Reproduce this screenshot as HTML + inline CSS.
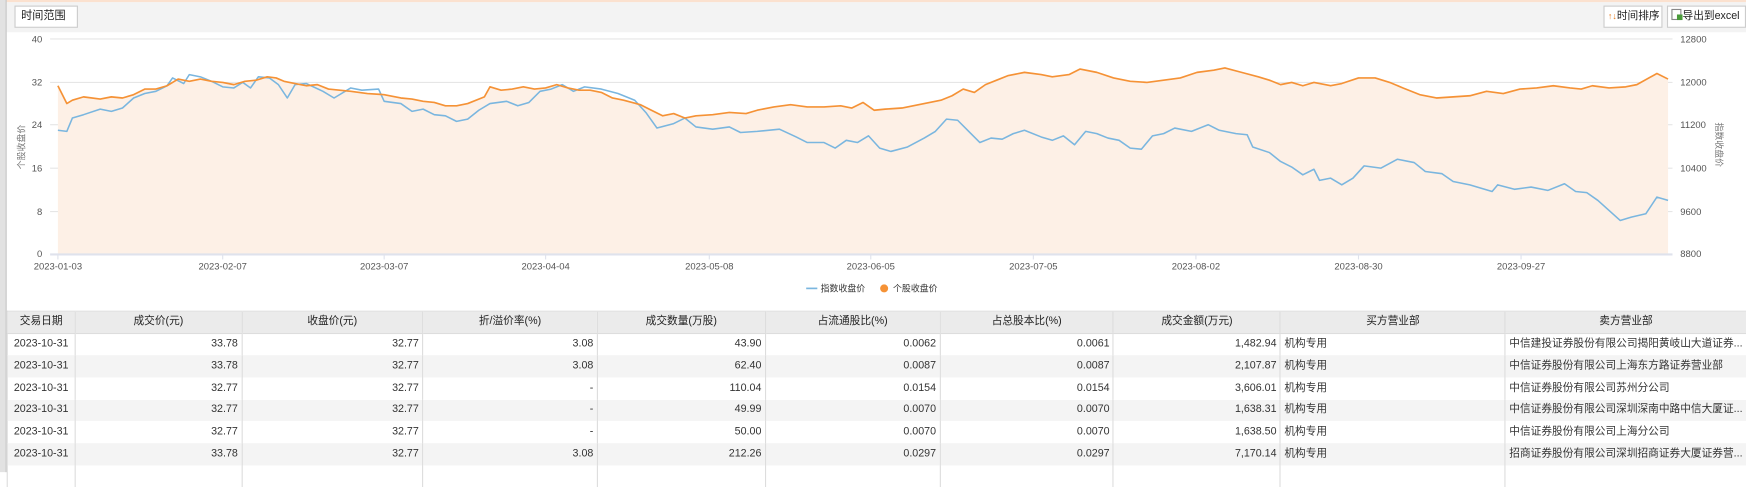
<!DOCTYPE html>
<html><head><meta charset="utf-8"><style>
html,body{margin:0;padding:0;width:1746px;height:472px;overflow:hidden;background:#fff;font-family:"Liberation Sans","Noto Sans CJK SC",sans-serif;}
#w{position:absolute;left:0;top:0;width:1568px;height:424px;transform:scale(1.11352);transform-origin:0 0;}
.abs{position:absolute}
.btn{position:absolute;background:#fff;border:1px solid #ccc;font-size:10px;color:#222;line-height:18px;box-sizing:border-box;height:20px;white-space:nowrap;overflow:hidden}
table{position:absolute;left:6px;top:279px;border-collapse:collapse;font-size:9.6px;color:#333;table-layout:fixed}
td,th{height:19.75px;line-height:12px;padding:0 3px;border-left:1px solid #ddd;white-space:nowrap;overflow:hidden;box-sizing:border-box;vertical-align:middle}
th{background:#ebebeb;font-weight:normal;color:#222;text-align:center;border-bottom:1px solid #ddd;border-top:1px solid #ddd}
td{text-align:right}
td.l{text-align:left}td.c{text-align:center}
tr:nth-child(odd) td{background:#f4f4f4}
</style></head><body><div id="w">
<div class="abs" style="left:0;top:0;width:1568px;height:2px;background:#fbe1cf"></div>
<div class="abs" style="left:0;top:2px;width:1568px;height:27px;background:#f3f3f3"></div>
<div class="abs" style="left:0;top:0;width:5px;height:424px;background:#e2e2e2;border-right:1px solid #c8c8c8"></div>
<div class="btn" style="left:13px;top:5px;width:57px;padding-left:5px">时间范围</div>
<div class="btn" style="left:1440px;top:5px;width:53px;padding-left:3px;font-size:9.6px"><span style="color:#e87d1e;font-size:8px">↑↓</span>时间排序</div>
<div class="btn" style="left:1497px;top:5px;width:71px;padding-left:3px;font-size:9.6px"><span style="display:inline-block;width:7px;height:8px;border:1px solid #888;vertical-align:-1px;position:relative;background:#fff;margin-right:1px"><span style="position:absolute;right:-2px;bottom:-1px;width:5px;height:5px;background:#4a9b3a"></span></span>导出到excel</div>
<svg class="abs" style="left:0;top:0" width="1568" height="300" viewBox="0 0 1568 300" font-family="Liberation Sans,Noto Sans CJK SC,sans-serif">
<g stroke="#e6e6e6" stroke-width="1">
<line x1="45" x2="1502" y1="35" y2="35"/><line x1="45" x2="1502" y1="74" y2="74"/><line x1="45" x2="1502" y1="112" y2="112"/><line x1="45" x2="1502" y1="151" y2="151"/><line x1="45" x2="1502" y1="190" y2="190"/>
</g>
<polygon fill="#fdf0e6" points="52,228 52,77 60,93 65,90 75,87 90,89 100,87 110,88 120,85 130,80 140,80 150,77 160,71 170,73 180,71 190,73 200,74 210,76 220,73 230,72 240,69 248,70 255,73 265,75 275,77 285,76 295,80 305,81 315,82 330,84 345,85 360,88 370,89 380,91 390,92 400,95 410,95 420,93 435,87 440,78 450,81 460,80 470,78 480,80 490,79 500,76 510,79 520,81 530,81 540,83 550,88 560,90 575,94 585,99 595,104 605,102 615,106 625,104 640,103 655,101 670,102 680,99 695,96 710,94 725,96 740,96 755,95 765,97 775,92 785,99 795,98 810,97 820,95 830,93 845,90 855,86 865,80 875,83 885,76 895,72 905,68 920,65 935,67 945,69 960,67 970,62 985,65 1000,70 1015,73 1030,74 1045,72 1060,70 1075,65 1090,63 1100,61 1115,65 1130,69 1140,72 1150,76 1160,74 1170,77 1180,74 1195,77 1205,75 1220,70 1235,70 1248,74 1260,79 1275,85 1290,88 1305,87 1320,86 1335,82 1350,84 1365,80 1380,79 1395,77 1410,79 1420,80 1430,77 1445,79 1460,78 1470,76 1488,66 1498,71 1498,228"/>
<line x1="45" x2="1502" y1="228.5" y2="228.5" stroke="#dfe2ec" stroke-width="2"/>
<g stroke="#dfe2ec"><line x1="52" x2="52" y1="228" y2="233"/><line x1="200" x2="200" y1="228" y2="233"/><line x1="345" x2="345" y1="228" y2="233"/><line x1="490" x2="490" y1="228" y2="233"/><line x1="637" x2="637" y1="228" y2="233"/><line x1="782" x2="782" y1="228" y2="233"/><line x1="928" x2="928" y1="228" y2="233"/><line x1="1074" x2="1074" y1="228" y2="233"/><line x1="1220" x2="1220" y1="228" y2="233"/><line x1="1366" x2="1366" y1="228" y2="233"/></g>
<polyline fill="none" stroke="#7ab6df" stroke-width="1.4" stroke-linejoin="round" points="52,117 60,118 65,106 75,103 90,98 100,100 110,97 120,88 130,84 140,82 150,77 155,70 165,75 170,67 180,69 190,73 200,78 210,79 218,74 225,79 232,69 242,70 250,76 258,88 265,76 275,75 290,82 300,88 315,79 325,81 340,80 345,91 360,93 370,100 380,98 390,103 400,104 410,109 420,107 430,99 440,93 455,91 465,95 475,92 485,82 495,80 505,76 515,82 525,78 540,80 555,84 570,90 580,101 590,115 605,111 615,106 625,114 640,116 655,114 665,119 680,118 700,116 715,123 725,128 740,128 750,133 760,126 770,128 780,122 790,133 800,136 815,132 830,124 840,118 850,107 860,108 870,118 880,128 890,124 900,125 910,120 920,117 935,123 945,126 955,122 965,130 975,118 985,120 995,124 1005,126 1015,133 1025,134 1035,122 1045,120 1055,115 1070,118 1085,112 1095,117 1110,120 1120,121 1125,132 1140,137 1150,145 1160,150 1170,157 1180,152 1185,162 1195,160 1205,166 1215,160 1225,149 1240,151 1255,143 1270,146 1280,154 1295,156 1305,163 1320,166 1340,172 1345,166 1360,170 1375,168 1390,171 1405,165 1415,172 1425,173 1435,180 1445,189 1455,198 1465,195 1478,192 1488,177 1498,180"/>
<polyline fill="none" stroke="#f59236" stroke-width="1.5" stroke-linejoin="round" points="52,77 60,93 65,90 75,87 90,89 100,87 110,88 120,85 130,80 140,80 150,77 160,71 170,73 180,71 190,73 200,74 210,76 220,73 230,72 240,69 248,70 255,73 265,75 275,77 285,76 295,80 305,81 315,82 330,84 345,85 360,88 370,89 380,91 390,92 400,95 410,95 420,93 435,87 440,78 450,81 460,80 470,78 480,80 490,79 500,76 510,79 520,81 530,81 540,83 550,88 560,90 575,94 585,99 595,104 605,102 615,106 625,104 640,103 655,101 670,102 680,99 695,96 710,94 725,96 740,96 755,95 765,97 775,92 785,99 795,98 810,97 820,95 830,93 845,90 855,86 865,80 875,83 885,76 895,72 905,68 920,65 935,67 945,69 960,67 970,62 985,65 1000,70 1015,73 1030,74 1045,72 1060,70 1075,65 1090,63 1100,61 1115,65 1130,69 1140,72 1150,76 1160,74 1170,77 1180,74 1195,77 1205,75 1220,70 1235,70 1248,74 1260,79 1275,85 1290,88 1305,87 1320,86 1335,82 1350,84 1365,80 1380,79 1395,77 1410,79 1420,80 1430,77 1445,79 1460,78 1470,76 1488,66 1498,71"/>
<g font-size="8.5" fill="#555" text-anchor="end">
<text x="38" y="38">40</text><text x="38" y="77">32</text><text x="38" y="115">24</text><text x="38" y="154">16</text><text x="38" y="193">8</text><text x="38" y="231">0</text>
</g>
<g font-size="8.5" fill="#555">
<text x="1509" y="38">12800</text><text x="1509" y="77">12000</text><text x="1509" y="115">11200</text><text x="1509" y="154">10400</text><text x="1509" y="193">9600</text><text x="1509" y="231">8800</text>
</g>
<g font-size="8.5" fill="#555" text-anchor="middle">
<text x="52" y="242">2023-01-03</text><text x="200" y="242">2023-02-07</text><text x="345" y="242">2023-03-07</text><text x="490" y="242">2023-04-04</text><text x="637" y="242">2023-05-08</text><text x="782" y="242">2023-06-05</text><text x="928" y="242">2023-07-05</text><text x="1074" y="242">2023-08-02</text><text x="1220" y="242">2023-08-30</text><text x="1366" y="242">2023-09-27</text>
</g>
<text font-size="8" fill="#777" text-anchor="middle" transform="translate(22,132) rotate(-90)">个股收盘价</text>
<text font-size="8" fill="#777" text-anchor="middle" transform="translate(1541,130) rotate(90)">指数收盘价</text>
<line x1="724" x2="734" y1="259" y2="259" stroke="#7ab6df" stroke-width="1.5"/>
<text x="737" y="262" font-size="8" fill="#333">指数收盘价</text>
<circle cx="794" cy="259" r="3.6" fill="#f59236"/>
<text x="802" y="262" font-size="8" fill="#333">个股收盘价</text>
</svg>
<table>
<colgroup><col style="width:61px"><col style="width:151px"><col style="width:164px"><col style="width:158px"><col style="width:152px"><col style="width:158px"><col style="width:157px"><col style="width:151px"><col style="width:204px"><col style="width:206px"></colgroup>
<tr><th>交易日期</th><th>成交价(元)</th><th>收盘价(元)</th><th>折/溢价率(%)</th><th>成交数量(万股)</th><th>占流通股比(%)</th><th>占总股本比(%)</th><th>成交金额(万元)</th><th>买方营业部</th><th>卖方营业部</th></tr>
<tr><td class="c">2023-10-31</td><td>33.78</td><td>32.77</td><td>3.08</td><td>43.90</td><td>0.0062</td><td>0.0061</td><td>1,482.94</td><td class="l">机构专用</td><td class="l">中信建投证券股份有限公司揭阳黄岐山大道证券...</td></tr>
<tr><td class="c">2023-10-31</td><td>33.78</td><td>32.77</td><td>3.08</td><td>62.40</td><td>0.0087</td><td>0.0087</td><td>2,107.87</td><td class="l">机构专用</td><td class="l">中信证券股份有限公司上海东方路证券营业部</td></tr>
<tr><td class="c">2023-10-31</td><td>32.77</td><td>32.77</td><td>-</td><td>110.04</td><td>0.0154</td><td>0.0154</td><td>3,606.01</td><td class="l">机构专用</td><td class="l">中信证券股份有限公司苏州分公司</td></tr>
<tr><td class="c">2023-10-31</td><td>32.77</td><td>32.77</td><td>-</td><td>49.99</td><td>0.0070</td><td>0.0070</td><td>1,638.31</td><td class="l">机构专用</td><td class="l">中信证券股份有限公司深圳深南中路中信大厦证...</td></tr>
<tr><td class="c">2023-10-31</td><td>32.77</td><td>32.77</td><td>-</td><td>50.00</td><td>0.0070</td><td>0.0070</td><td>1,638.50</td><td class="l">机构专用</td><td class="l">中信证券股份有限公司上海分公司</td></tr>
<tr><td class="c">2023-10-31</td><td>33.78</td><td>32.77</td><td>3.08</td><td>212.26</td><td>0.0297</td><td>0.0297</td><td>7,170.14</td><td class="l">机构专用</td><td class="l">招商证券股份有限公司深圳招商证券大厦证券营...</td></tr>
<tr><td class="c"></td><td></td><td></td><td></td><td></td><td></td><td></td><td></td><td class="l"></td><td class="l"></td></tr>
</table>
</div></body></html>
